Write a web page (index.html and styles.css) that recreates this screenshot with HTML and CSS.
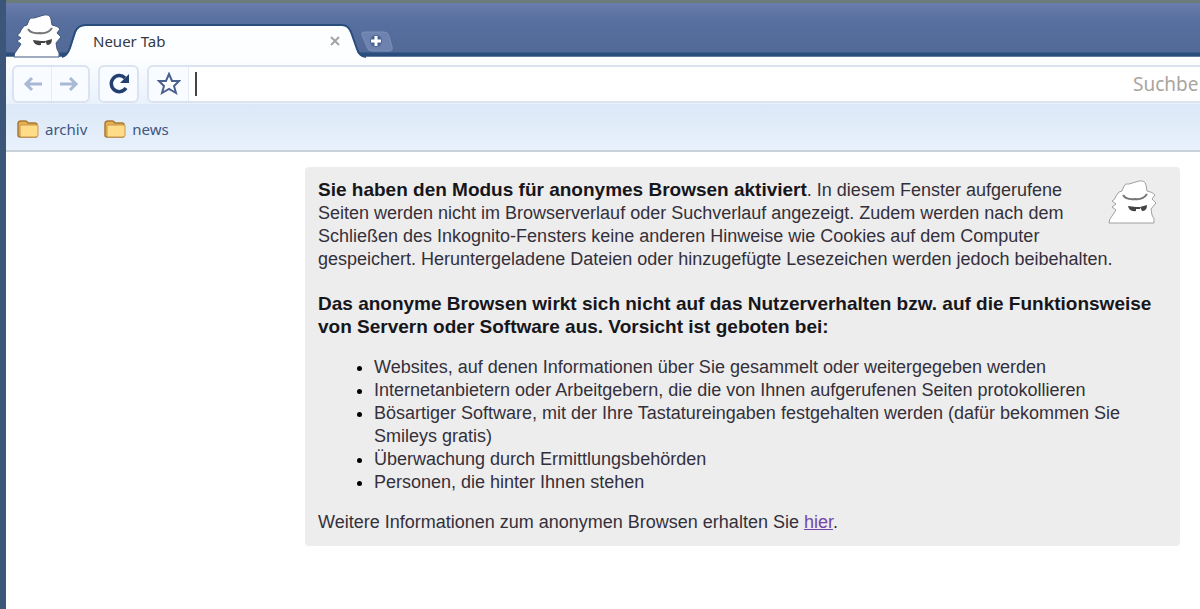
FILE: index.html
```html
<!DOCTYPE html>
<html lang="de">
<head>
<meta charset="utf-8">
<title>Neuer Tab</title>
<link rel="stylesheet" href="styles.css">
</head>
<body>
<svg class="defs" aria-hidden="true">
  <symbol id="spy" viewBox="0 0 50 44">
    <path class="spy-shape" d="M2 43 Q2 39 5 36 L9 30 L5 27 L9 24 L5 21 Q8 20 9 16 L12 12 L15 11 L17 6 Q18 3 22 4 L32 1 Q38 0 39 5 L40 11 Q46 12 48 15 L45 19 L49 23 L44 29 L45 35 Q48 39 47 43 Z"/>
    <path class="spy-line" d="M16 15 Q19 20 28 19 Q36 20 40 14"/>
    <path class="spy-eyes" d="M21 26 L29 27 L29 31 Q22 32 21 26 Z M33 27 L40 25 Q40 31 35 31 Z M29 27 H33 V29 H29 Z"/>
  </symbol>
  <symbol id="folder" viewBox="0 0 24 20">
    <path d="M2 5 Q2 2 5 2 H9 Q11 2 12 4 H19 Q21 4 21 6 V17 Q21 18 20 18 H4 Q2 18 2 16 Z" fill="#e6b052" stroke="#a87935" stroke-width="1.5"/>
    <path d="M5 6 H21 Q22 6 22 7 V16 Q22 18 20 18 H5 Q4 18 4 16 V7 Q4 6 5 6 Z" fill="#ffdc87" stroke="#c8964a"/>
  </symbol>
</svg>
<div class="window">
  <header class="titlebar">
    <svg class="spy spy-badge" role="img" aria-label="Inkognito"><use href="#spy"/></svg>
    <div class="tab">
      <svg class="tab-cap" viewBox="0 0 24 34">
        <path d="M0 34 Q5 33 8 25 L14 8 Q17 1 24 1 V34 Z" fill="#fdfeff"/>
        <path d="M0 33 Q5 32 8 24 L13 8 Q16 1 24 1" fill="none" stroke="#294d7c" stroke-width="2"/>
      </svg>
      <div class="tab-body">
        <span>Neuer Tab</span>
        <button class="close" aria-label="Tab schließen"><svg viewBox="0 0 12 12"><path d="M2 2 L10 10 M10 2 L2 10" stroke="#a3a3a6" stroke-width="2"/></svg></button>
      </div>
      <svg class="tab-cap" viewBox="0 0 24 34">
        <path d="M0 1 Q6 1 9 8 L15 26 Q17 33 24 34 H0 Z" fill="#fdfeff"/>
        <path d="M0 1 Q6 1 9 8 L15 25 Q17 32 24 33" fill="none" stroke="#294d7c" stroke-width="2"/>
      </svg>
    </div>
    <button class="new-tab" aria-label="Neuer Tab öffnen">
      <svg viewBox="0 0 36 26"><path d="M4 3 H24 Q28 3 29 7 L32 18 Q33 22 29 22 H12 Q8 22 7 18 L2 6 Q1 3 4 3 Z" fill="#6d82ae" stroke="#7d90b8"/><circle cx="16" cy="12" r="6" fill="#4a6390"/><path d="M16 7 V17 M11 12 H21" stroke="#fff" stroke-width="3"/></svg>
    </button>
  </header>
  <nav class="toolbar">
    <div class="group">
      <button aria-label="Zurück"><svg viewBox="0 0 22 22"><path d="M20 11 H4 M10 5 L4 11 L10 17" fill="none" stroke="#a9b9d3" stroke-width="3"/></svg></button>
      <button aria-label="Vorwärts"><svg viewBox="0 0 22 22"><path d="M1 11 H17 M11 5 L17 11 L11 17" fill="none" stroke="#a9b9d3" stroke-width="3"/></svg></button>
    </div>
    <div class="group">
      <button aria-label="Neu laden"><svg viewBox="0 0 22 22"><path d="M17 5 A8 8 0 1 0 18 15" fill="none" stroke="#223f70" stroke-width="3.5"/><path d="M21 1 V10 H12 Z" fill="#223f70"/></svg></button>
    </div>
    <div class="omnibox">
      <button aria-label="Lesezeichen hinzufügen"><svg viewBox="0 0 24 24"><path d="M12 2 L15 9 L22 9 L17 14 L19 21 L12 17 L5 21 L7 14 L2 9 L9 9 Z" fill="#fff" stroke="#4a618f" stroke-width="2"/></svg></button>
      <span class="caret"></span>
      <input type="text" aria-label="Adresse">
      <span class="hint">Suchbe</span>
    </div>
  </nav>
  <nav class="bookmarks">
    <a href="#archiv"><svg><use href="#folder"/></svg>archiv</a>
    <a href="#news"><svg><use href="#folder"/></svg>news</a>
  </nav>
  <main class="page">
    <section class="notice">
      <svg class="spy spy-outline" role="img" aria-label="Inkognito"><use href="#spy"/></svg>
      <p><b>Sie haben den Modus für anonymes Browsen aktiviert</b>. In diesem Fenster aufgerufene Seiten werden nicht im Browserverlauf oder Suchverlauf angezeigt. Zudem werden nach dem Schließen des Inkognito-Fensters keine anderen Hinweise wie Cookies auf dem Computer gespeichert. Heruntergeladene Dateien oder hinzugefügte Lesezeichen werden jedoch beibehalten.</p>
      <p><b>Das anonyme Browsen wirkt sich nicht auf das Nutzerverhalten bzw. auf die Funktionsweise von Servern oder Software aus. Vorsicht ist geboten bei:</b></p>
      <ul>
        <li>Websites, auf denen Informationen über Sie gesammelt oder weitergegeben werden</li>
        <li>Internetanbietern oder Arbeitgebern, die die von Ihnen aufgerufenen Seiten protokollieren</li>
        <li>Bösartiger Software, mit der Ihre Tastatureingaben festgehalten werden (dafür bekommen Sie Smileys gratis)</li>
        <li>Überwachung durch Ermittlungsbehörden</li>
        <li>Personen, die hinter Ihnen stehen</li>
      </ul>
      <p>Weitere Informationen zum anonymen Browsen erhalten Sie <a href="#hier">hier</a>.</p>
    </section>
  </main>
</div>
</body>
</html>
```
FILE: styles.css
```css
* { box-sizing: border-box; }
body { margin: 0; background: #fff; font-family: "Liberation Sans", Arial, sans-serif; }
button { border: 0; padding: 0; background: none; display: flex; align-items: center; justify-content: center; }
.defs { display: none; }
.window { min-height: 100vh; display: flex; flex-direction: column; border-left: 6px solid #3c5679; overflow: hidden; }

.titlebar {
  display: flex; align-items: flex-end; height: 58px; margin-left: -6px; padding-left: 12px;
  border-top: 3px solid #6b7c78;
  background: linear-gradient(#6a7cab, #566f9e 35%, #536a98 88%, #294d7c 92%, #294d7c 97%, #fff 98%);
}
.spy { width: 50px; height: 44px; }
.spy-shape { fill: #fff; }
.spy-line { fill: none; stroke: #777; stroke-width: 2; }
.spy-badge { stroke: #40577f; }
.spy-outline { stroke: #a0a0a0; }
.spy-eyes { fill: #444; stroke: none; }
.tab { display: flex; height: 34px; }
.tab-cap { width: 24px; height: 34px; }
.tab-body {
  width: 256px; display: flex; align-items: center; justify-content: space-between;
  padding: 0 0 3px 7px; border-top: 2px solid #294d7c; background: #fdfeff;
  font: 15px "Noto Sans", sans-serif; color: #333946;
}
.close { width: 12px; height: 12px; margin-right: 1px; }
.new-tab { width: 36px; height: 26px; margin-bottom: 3px; margin-left: -6px; }

.toolbar { display: flex; gap: 8px; height: 46px; padding: 7px 0 0 6px; background: linear-gradient(#fdfeff, #e9f1fb); }
.group, .omnibox { display: flex; height: 38px; border: 2px solid #dbe2f0; border-radius: 6px; background: #f8fbff; }
.group button { width: 37px; }
.group button + button { border-left: 1px solid #e6ecf6; }
.group svg { width: 22px; height: 22px; }
.omnibox { flex: 1; min-width: 0; align-items: center; border-right: 0; border-radius: 6px 0 0 6px; background: #fff; }
.omnibox button { width: 40px; height: 34px; border-right: 1px solid #e6ecf6; background: #f8fbff; border-radius: 6px 0 0 6px; }
.omnibox svg { width: 24px; height: 24px; }
.caret { width: 2px; height: 24px; margin-left: 6px; background: #444; }
.omnibox input { flex: 1; min-width: 0; height: 34px; border: 0; outline: 0; background: none; font: 18px "Noto Sans", sans-serif; }
.hint { width: 67px; overflow: hidden; white-space: nowrap; font: 19px "Noto Sans", sans-serif; color: #aaa49e; }

.bookmarks { display: flex; align-items: center; gap: 16px; height: 48px; padding: 4px 0 0 10px; border-bottom: 2px solid #c8d0d8; background: linear-gradient(#dce8f7, #e8f1fc); }
.bookmarks a { display: flex; align-items: center; gap: 5px; color: #405582; text-decoration: none; font: 15px "Noto Sans", sans-serif; }
.bookmarks svg { width: 24px; height: 20px; }

.page { flex: 1; padding: 15px 20px 20px 299px; }
.notice { padding: 12px 13px; border-radius: 4px; background: #ededed; color: #34303b; font-size: 18px; line-height: 23px; }
.notice b { font-size: 19px; line-height: 22px; color: #16161b; }
.notice p { margin: 0 0 22px; }
.notice p:last-child { margin: 0; }
.notice ul { margin: -5px 0 17px; padding-left: 56px; }
.notice li::marker { color: #000; }
.notice a { color: #7445a8; }
.spy-outline { float: right; margin: 1px 10px 6px 24px; }
```
